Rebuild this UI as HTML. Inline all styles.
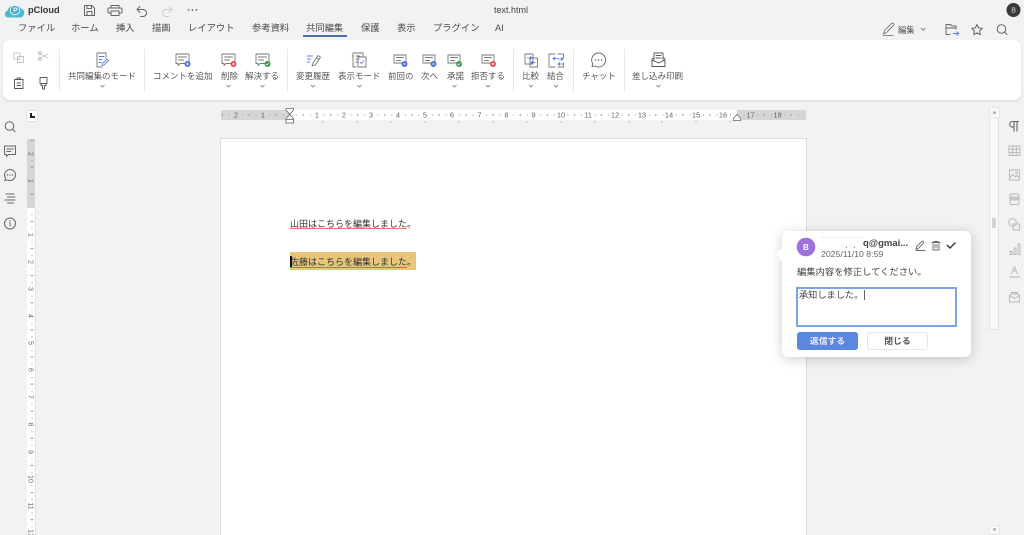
<!DOCTYPE html>
<html lang="ja"><head><meta charset="utf-8"><title>text.html</title>
<style>
html,body{margin:0;padding:0;background:#f2f2f2;width:1024px;height:535px;overflow:hidden}
#root{position:relative;width:1024px;height:535px;overflow:hidden;background:#f2f2f2;font-family:"Liberation Sans","Noto Sans CJK JP",sans-serif;color:#444;filter:blur(.3px)}
.t{position:absolute;white-space:nowrap;line-height:12px}
.m{font-size:9.3px;top:22px;color:#4a4a4a;letter-spacing:0}
.l{font-size:8.5px;top:70px;color:#555}
.sep{position:absolute;width:1px;top:49px;height:43px;background:#e9e9e9}
svg{position:absolute;overflow:visible}
.i{fill:none;stroke:#666;stroke-width:1;stroke-linecap:round;stroke-linejoin:round}
.c{fill:none;stroke:#777;stroke-width:.9;stroke-linecap:round;stroke-linejoin:round}
.g{stroke:#aaa}
</style></head><body><div id="root">

<!-- title bar -->
<svg style="left:0;top:0" width="1024" height="40" viewBox="0 0 1024 40">
<path d="M8 17.5a3.4 3.4 0 0 1-.6-6.7A7.6 7.6 0 0 1 21 8.4a4.7 4.7 0 0 1-.6 9.1z" fill="#4fb9d3"/>
<circle cx="15" cy="10" r="5.2" fill="#fff" opacity=".95"/><circle cx="15" cy="10" r="4.3" fill="#3fa8cc"/>
<text x="13.1" y="12.600" font-size="7" font-weight="700" fill="#fff" font-family="Liberation Sans">P</text>
<g class="i"><path d="M84.5 5.5h7.5l2.500 2.500v7.500h-10zM87 5.500v3h4.500v-3M87 15.500v-4h5v4"/>
<path d="M111 8V5.500h8V8M110.500 13h-1.500a1 1 0 0 1-1-1V9a1 1 0 0 1 1-1h12a1 1 0 0 1 1 1v3a1 1 0 0 1-1 1h-1.500M111 11h8v4.500h-8z"/>
<path d="M140 6.500l-3 3 3 3M137 9.500h6a3.500 3.500 0 0 1 0 7h-2.500"/></g>
<path class="i" style="stroke:#ccc" d="M169 6.500l3 3-3 3M172 9.500h-6a3.500 3.500 0 0 0 0 7h2.500"/>
<g fill="#666"><circle cx="188.500" cy="10" r=".9"/><circle cx="192.500" cy="10" r=".9"/><circle cx="196.500" cy="10" r=".9"/></g>
<circle cx="1013.500" cy="10" r="7" fill="#3a3a3a"/>
<text x="1011.300" y="12.600" font-size="7" fill="#ddd" font-family="Liberation Sans">B</text>
<g class="i"><path d="M883.500 34l1-3.500 7-7a1.300 1.300 0 0 1 2 2l-7 7zM883 35.500h10" stroke-width=".8"/>
<path d="M946 34.500v-10h4.500l1.500 1.500h4v3M946 28h10M946 34.500h4"/>
<path d="M977 24.500l1.600 3.400 3.700.5-2.700 2.600.7 3.700-3.300-1.800-3.300 1.800.7-3.700-2.700-2.600 3.700-.5z"/>
<circle cx="1001.500" cy="29" r="4.300"/><path d="M1004.700 32.200l2.300 2.300"/></g>
<path d="M953 33.500h5M956.500 31.500l2 2-2 2" fill="none" stroke="#4d7fe0" stroke-width="1"/>
<path d="M921 28l2.200 2.200 2.200-2.200" fill="none" stroke="#666" stroke-width=".8"/>
</svg>
<div class="t" style="left:28px;top:4px;font-size:9.200px;font-weight:700;color:#333">pCloud</div>
<div class="t" style="left:494px;top:4px;font-size:9px;color:#444">text.html</div>
<div class="t" style="left:898px;top:24px;font-size:8.300px;color:#555">編集</div>

<!-- tabs -->
<div class="t m" style="left:18px">ファイル</div>
<div class="t m" style="left:71px">ホーム</div>
<div class="t m" style="left:116px">挿入</div>
<div class="t m" style="left:152px">描画</div>
<div class="t m" style="left:188px">レイアウト</div>
<div class="t m" style="left:252px">参考資料</div>
<div class="t m" style="left:306px">共同編集</div>
<div style="position:absolute;left:303px;top:35px;width:44px;height:2px;background:#4a6ea8"></div>
<div class="t m" style="left:361px">保護</div>
<div class="t m" style="left:397px">表示</div>
<div class="t m" style="left:433px">プラグイン</div>
<div class="t m" style="left:495px">AI</div>

<!-- ribbon -->
<div style="position:absolute;left:3px;top:40px;width:1018px;height:60px;background:#fff;border-radius:7px;box-shadow:0 1px 2px rgba(0,0,0,.13)"></div>
<div class="sep" style="left:59px"></div><div class="sep" style="left:144px"></div><div class="sep" style="left:287px"></div>
<div class="sep" style="left:513px"></div><div class="sep" style="left:573px"></div><div class="sep" style="left:624px"></div>
<div class="t l" style="left:68px">共同編集のモード</div>
<div class="t l" style="left:153px">コメントを追加</div>
<div class="t l" style="left:221px">削除</div>
<div class="t l" style="left:245px">解決する</div>
<div class="t l" style="left:296px">変更履歴</div>
<div class="t l" style="left:338px">表示モード</div>
<div class="t l" style="left:388px">前回の</div>
<div class="t l" style="left:421px">次へ</div>
<div class="t l" style="left:447px">承諾</div>
<div class="t l" style="left:471px">拒否する</div>
<div class="t l" style="left:522px">比較</div>
<div class="t l" style="left:547px">結合</div>
<div class="t l" style="left:582px">チャット</div>
<div class="t l" style="left:632px">差し込み印刷</div>

<svg style="left:0;top:0" width="1024" height="105" viewBox="0 0 1024 105">
<!-- clipboard group -->
<g class="c" style="stroke:#c4c4c4"><path d="M14 53h6v6h-6zM17.500 56.500h6v6h-6z"/><path d="M39 53l9 5M39 59l9-5"/><circle cx="40" cy="53" r="1.500"/><circle cx="40" cy="59" r="1.500"/></g>
<g class="c" style="stroke:#555"><path d="M14.500 79.500h8.500v9h-8.500zM17 78h3.500v1.500H17zM17 83h3.500M17 85.500h3.500"/>
<path d="M40 77.500h7v6h-7zM41 83.500h5v2h-1.500v3.500h-2v-3.500H41z"/></g>
<!-- mode -->
<g class="c"><path d="M97 53h9v5M97 53v14h5"/><path d="M99 56.500h5M99 59.500h3M99 62.500h2" stroke="#5d7fdc"/></g>
<path d="M102 65.500l.5-2 4.500-4.500 1.500 1.500-4.500 4.500z" fill="none" stroke="#5d7fdc" stroke-width=".9"/>
<!-- comment icons -->
<g class="c"><path d="M176 54h13v9.500h-9l-2 2v-2h-2zM178.500 57h8M178.500 60h5"/></g>
<circle cx="187.500" cy="64" r="3" fill="#4a74d8"/><path d="M186 64h3M187.500 62.500v3" stroke="#fff" stroke-width=".7"/>
<g class="c"><path d="M222 54h13v9.500h-9l-2 2v-2h-2zM224.500 57h8M224.500 60h5"/></g>
<circle cx="233.500" cy="64" r="3" fill="#e0524f"/><path d="M232.500 63l2 2M234.500 63l-2 2" stroke="#fff" stroke-width=".7"/>
<g class="c"><path d="M256 54h13v9.500h-9l-2 2v-2h-2zM258.500 57h8M258.500 60h5"/></g>
<circle cx="267.500" cy="64" r="3" fill="#3c9a5a"/><path d="M266 64l1 1 1.700-1.700" stroke="#fff" stroke-width=".7" fill="none"/>
<!-- history -->
<path d="M307 56h6M307 59h4M307 62h3" stroke="#5d7fdc" stroke-width=".9"/>
<path class="c" d="M312 66l1-3 5-7.500 2.500 1.800-5 7.500zM316.500 57.500l2.500 1.800"/>
<!-- view mode -->
<g class="c"><path d="M353 57v-4h10v3M353 57v10h3M353 56h-1M356 56h4M356 59h3M356 62h2"/><path d="M358 57h8v10h-8z"/></g>
<path d="M360 62l1.500 1.500 2.700-3" fill="none" stroke="#5d7fdc" stroke-width=".9"/>
<!-- prev/next/accept/reject -->
<g class="c"><path d="M394 55h12v8h-12zM396.500 57.500h7M396.500 60.500h4"/></g>
<circle cx="404.500" cy="64" r="3" fill="#4a74d8"/><path d="M403 64h3" stroke="#fff" stroke-width=".8"/>
<g class="c"><path d="M423 55h12v8h-12zM425.500 57.500h7M425.500 60.500h4"/></g>
<circle cx="433.500" cy="64" r="3" fill="#4a74d8"/><path d="M432 64h3" stroke="#fff" stroke-width=".8"/>
<g class="c"><path d="M448 55h12v8h-12zM450.500 57.500h7M450.500 60.500h4"/></g>
<circle cx="459" cy="64" r="3" fill="#3c9a5a"/><path d="M457.500 64l1 1 1.700-1.700" stroke="#fff" stroke-width=".7" fill="none"/>
<g class="c"><path d="M482 55h12v8h-12zM484.500 57.500h7M484.500 60.500h4"/></g>
<circle cx="493" cy="64" r="3" fill="#e0524f"/><path d="M492 63l2 2M494 63l-2 2" stroke="#fff" stroke-width=".7"/>
<!-- compare/merge -->
<g class="c"><path d="M525 54h8v10h-8zM530 58h7.500v9h-7.500z"/></g>
<path d="M527 58h5M530 56.500l2 1.500-2 1.500M535.500 62.500h-4M533 61l-2 1.500 2 1.500" fill="none" stroke="#4a74d8" stroke-width=".8"/>
<g class="c"><path d="M555 54h-6v13h6M558 54h5.500v4M563.500 63v4H558"/></g>
<path d="M553 58.500h5M555 57l-2 1.500 2 1.500M558 64h5M560 62.500l-2 1.500 2 1.500M558 59h5M561 57.500l2 1.500-2 1.500" fill="none" stroke="#4a74d8" stroke-width=".8"/>
<!-- chat -->
<path class="c" style="stroke:#666" d="M598.500 53a7 7 0 1 1-3.500 13l-3 .8.800-3a7 7 0 0 1 5.700-10.800z"/>
<g fill="#666"><circle cx="595.500" cy="60" r=".8"/><circle cx="598.500" cy="60" r=".8"/><circle cx="601.500" cy="60" r=".8"/></g>
<!-- mail merge -->
<g class="c" style="stroke:#555"><path d="M652 59v7.500h13V59l-2-1.500M652 59l2-1.500M654 60v-7h9v7M652 60l6.500 3 6.500-3M656 55.500h5M656 58h5"/></g>
<!-- chevrons -->
<g fill="none" stroke="#777" stroke-width=".8">
<path d="M100.500 85l2 2 2-2M226.500 85l2 2 2-2M260.500 85l2 2 2-2M311 85l2 2 2-2M357.500 85l2 2 2-2M452.500 85l2 2 2-2M486 85l2 2 2-2M529 85l2 2 2-2M554 85l2 2 2-2M656.500 85l2 2 2-2"/></g>
</svg>

<!-- corner -->
<div style="position:absolute;left:26px;top:110px;width:10px;height:10px;background:#fff;border:1px solid #e2e2e2"></div>
<div style="position:absolute;left:29.500px;top:113px;width:2px;height:5px;background:#222"></div>
<div style="position:absolute;left:29.500px;top:116px;width:5px;height:2px;background:#222"></div>

<!-- horizontal ruler -->
<svg style="left:221px;top:110px" width="585" height="18" viewBox="221 110 585 18" font-family="Liberation Sans">
<defs><pattern id="hp" x="290" y="110" width="27.100" height="10" patternUnits="userSpaceOnUse">
<rect x="6.400" y="4.500" width="1" height="1" fill="#999"/><rect x="13" y="4" width="1" height="2" fill="#999"/><rect x="20" y="4.500" width="1" height="1" fill="#999"/></pattern>
<pattern id="vp" x="27" y="208" width="10" height="27.100" patternUnits="userSpaceOnUse">
<rect x="4.500" y="6.400" width="1" height="1" fill="#999"/><rect x="3.500" y="13" width="3" height="1" fill="#999"/><rect x="4.500" y="20" width="1" height="1" fill="#999"/></pattern></defs>
<rect x="221" y="110" width="585" height="10" fill="#d6d6d6"/>
<rect x="290" y="110" width="447" height="10" fill="#fff"/>
<rect x="221" y="110" width="585" height="10" fill="url(#hp)"/>
<g font-size="7.500" fill="#666" text-anchor="middle">
<text x="236" y="117.700" style="paint-order:stroke" stroke="#d6d6d6" stroke-width="2">2</text><text x="263" y="117.700" stroke="#d6d6d6" stroke-width="2" style="paint-order:stroke">1</text>
<g stroke="#fff" stroke-width="2" style="paint-order:stroke">
<text x="317" y="117.700">1</text><text x="344" y="117.700">2</text><text x="371" y="117.700">3</text><text x="398" y="117.700">4</text><text x="425" y="117.700">5</text><text x="452" y="117.700">6</text><text x="479.500" y="117.700">7</text><text x="506.500" y="117.700">8</text><text x="533.500" y="117.700">9</text><text x="561" y="117.700">10</text><text x="588" y="117.700">11</text><text x="615" y="117.700">12</text><text x="642" y="117.700">13</text><text x="669" y="117.700">14</text><text x="696" y="117.700">15</text><text x="723" y="117.700">16</text></g>
<g stroke="#d6d6d6" stroke-width="2" style="paint-order:stroke"><text x="750.500" y="117.700">17</text><text x="777.500" y="117.700">18</text></g></g>
<path d="M323 121v1.500M357 121v1.500M391 121v1.500M425 121v1.500M459 121v1.500M493 121v1.500M527 121v1.500M561 121v1.500M595 121v1.500M629 121v1.500M662 121v1.500M696 121v1.500M730 121v1.500" stroke="#999" stroke-width=".8"/>
<g fill="#fff" stroke="#666" stroke-width=".8"><path d="M286 108.500h7.500v1.500l-3.750 4.500-3.750-4.500z"/><path d="M289.750 114.500l3.750 4v1.500h-7.500v-1.500z"/><rect x="286" y="119.500" width="7.500" height="3.500"/>
<path d="M737 114.500l3.750 4v2h-7.500v-2z"/></g>
</svg>

<!-- vertical ruler -->
<svg style="left:27px;top:139px" width="9" height="396" viewBox="27 139 9 396" font-family="Liberation Sans">
<rect x="27" y="139" width="8" height="396" fill="#fff"/><rect x="27" y="139" width="8" height="69" fill="#d6d6d6"/>
<rect x="35" y="208" width="1" height="327" fill="#e2e2e2"/>
<rect x="27" y="139" width="8" height="396" fill="url(#vp)"/>
<g font-size="7" fill="#666" text-anchor="middle">
<text transform="translate(28.500 154) rotate(90)" stroke="#d6d6d6" stroke-width="2" style="paint-order:stroke">2</text>
<text transform="translate(28.500 181) rotate(90)" stroke="#d6d6d6" stroke-width="2" style="paint-order:stroke">1</text>
<g stroke="#fff" stroke-width="2" style="paint-order:stroke">
<text transform="translate(28.500 235) rotate(90)">1</text><text transform="translate(28.500 262) rotate(90)">2</text><text transform="translate(28.500 289) rotate(90)">3</text><text transform="translate(28.500 316) rotate(90)">4</text><text transform="translate(28.500 343) rotate(90)">5</text><text transform="translate(28.500 370) rotate(90)">6</text><text transform="translate(28.500 397) rotate(90)">7</text><text transform="translate(28.500 424.500) rotate(90)">8</text><text transform="translate(28.500 452) rotate(90)">9</text><text transform="translate(28.500 479) rotate(90)">10</text><text transform="translate(28.500 506) rotate(90)">11</text><text transform="translate(28.500 533) rotate(90)">12</text></g></g>
</svg>

<!-- left sidebar icons -->
<svg style="left:0;top:115px" width="22" height="120" viewBox="0 115 22 120">
<g class="i"><circle cx="9.500" cy="126" r="4.300"/><path d="M12.700 129.300l2.300 2.300"/>
<path d="M4.500 146h11v8.500h-7l-2 2v-2h-2zM6.800 149h6.500M6.800 151.500h4"/>
<path d="M10 169.500a5.500 5.500 0 1 1-2.500 10.400l-2.700.8.800-2.500A5.500 5.500 0 0 1 10 169.500z"/>
<path d="M6 194h8M7.500 197h7.500M5 200h10M7.500 203h6"/>
<circle cx="10" cy="223.500" r="5.500"/><path d="M10 222.500v3.500M10 220.500v.5"/></g>
<g fill="#666"><circle cx="7.500" cy="175" r=".7"/><circle cx="10" cy="175" r=".7"/><circle cx="12.500" cy="175" r=".7"/></g>
</svg>

<!-- page -->
<div style="position:absolute;left:220px;top:138px;width:585px;height:420px;background:#fff;border:1px solid #dcdcdc"></div>
<div class="t" style="left:290px;top:218px;font-size:9px;color:#333">山田はこちらを編集しました。</div>
<div style="position:absolute;left:290px;top:228px;width:117px;height:1px;background:#f0746a"></div>
<div style="position:absolute;left:290px;top:252px;width:126px;height:18px;background:#e8c47c"></div>
<div class="t" style="left:290px;top:256px;font-size:9px;color:#333">佐藤はこちらを編集しました。</div>
<div style="position:absolute;left:290px;top:266.500px;width:117px;height:1px;background:#e0603f"></div>
<div style="position:absolute;left:290px;top:256px;width:1.500px;height:11px;background:#111"></div>

<!-- right scrollbar -->
<div style="position:absolute;left:989px;top:107px;width:9px;height:9px;background:#f8f8f8;border:1px solid #e6e6e6;box-sizing:content-box"></div>
<svg style="left:989px;top:107px" width="11" height="11"><path d="M3.500 6.500h4l-2-2.500z" fill="#999"/></svg>
<div style="position:absolute;left:989px;top:117px;width:8px;height:211px;background:#fbf7f4;border:1px solid #e4e4e4"></div>
<div style="position:absolute;left:992px;top:218px;width:4px;height:10px;background:#d4d4d4"></div>
<div style="position:absolute;left:989px;top:525px;width:9px;height:8px;background:#f8f8f8;border:1px solid #e6e6e6"></div>
<svg style="left:989px;top:525px" width="11" height="10"><path d="M3.500 3.500h4l-2 2.500z" fill="#999"/></svg>

<!-- right sidebar icons -->
<svg style="left:1004px;top:115px" width="20" height="195" viewBox="1004 115 20 195">
<path d="M1019 121.500h-6.500a2.800 2.800 0 0 0 0 5.600h1.300M1014 121.500v10M1017 121.500v10" fill="none" stroke="#666" stroke-width="1.100"/>
<g class="c" style="stroke:#b5b5b5"><path d="M1009 146h11v9.500h-11zM1009 149.200h11M1009 152.400h11M1012.700 146v9.500M1016.300 146v9.500"/>
<path d="M1009.500 170h10v10h-10zM1009.500 178l3.500-3.500 2.500 2.500 1.500-1.500 2.500 2.500"/><circle cx="1016.500" cy="172.800" r=".9"/>
<rect x="1010" y="194" width="9" height="10.500" rx="1.500"/>
<circle cx="1012.500" cy="222.500" r="3.800"/><path d="M1013 224h6.500v6H1013z"/>
<path d="M1010 251.500h2v3h-2zM1014 248h2v6.500h-2zM1018 244h2v10.500h-2z"/>
<path d="M1014.500 266.500l-3 7.500M1014.500 266.500l3 7.500M1012.700 271h3.600M1009.500 277h10"/>
<path d="M1009.500 295.500v6.500h10v-6.500l-2-1.500h-6zM1009.500 295.500l5 3 5-3M1011.500 294v-1.500h6v1.500"/></g>
<rect x="1010.500" y="196.500" width="8" height="4" fill="#c6c6c6"/>
</svg>

<!-- comment card -->
<div style="position:absolute;left:782px;top:231px;width:189px;height:126px;background:#fff;border-radius:6px;box-shadow:0 2px 12px rgba(0,0,0,.2)"></div>
<svg style="left:775px;top:245px" width="9" height="20"><path d="M8 1L1 9l7 8z" fill="#fff"/></svg>
<svg style="left:796px;top:237px" width="165" height="20" viewBox="796 237 165 20">
<circle cx="806" cy="247" r="9.300" fill="#9d72d9"/>
<text x="803" y="250" font-size="8" font-weight="700" fill="#fff" font-family="Liberation Sans">B</text>
<path d="M821 237.500h43" stroke="#e8e8e8" stroke-width=".8"/>
<g fill="#777"><rect x="846" y="247" width="1" height="1"/><rect x="854" y="247" width="1" height="1"/></g>
<g class="i"><path d="M916 249.500l.8-3 5-5a1 1 0 0 1 1.700 1.700l-5 5zM916 250.500h9" stroke-width=".9"/>
<path d="M932 242.500h8M934 242.500v-1h4v1M933 242.500v7.500h6v-7.500M935 244.500v3.500M937 244.500v3.500" stroke-width=".9"/></g>
<path d="M947 245l3 3 5.500-5.500" fill="none" stroke="#333" stroke-width="1.400"/>
</svg>
<div class="t" style="left:863px;top:238px;font-size:9.500px;font-weight:700;color:#444">q@gmai...</div>
<div class="t" style="left:821px;top:248px;font-size:8.700px;color:#666">2025/11/10 8:59</div>
<div class="t" style="left:797px;top:266px;font-size:9.300px;color:#444">編集内容を修正してください。</div>
<div style="position:absolute;left:796px;top:287px;width:161px;height:40px;box-sizing:border-box;background:#fff;border:2px solid #7aa3ea"></div>
<div class="t" style="left:799px;top:289px;font-size:9.200px;color:#444">承知しました。</div>
<div style="position:absolute;left:864px;top:290px;width:1px;height:10px;background:#666"></div>
<div class="t" style="left:797px;top:332px;width:61px;height:18px;line-height:18px;text-align:center;background:#5b87e0;border-radius:3px;color:#e8eefb;font-size:8.800px;font-weight:700">返信する</div>
<div class="t" style="left:867px;top:332px;width:59px;height:16px;line-height:16px;text-align:center;background:#fff;border:1px solid #e6e6e6;border-radius:3px;color:#555;font-size:8.800px;font-weight:700">閉じる</div>
</div></body></html>
